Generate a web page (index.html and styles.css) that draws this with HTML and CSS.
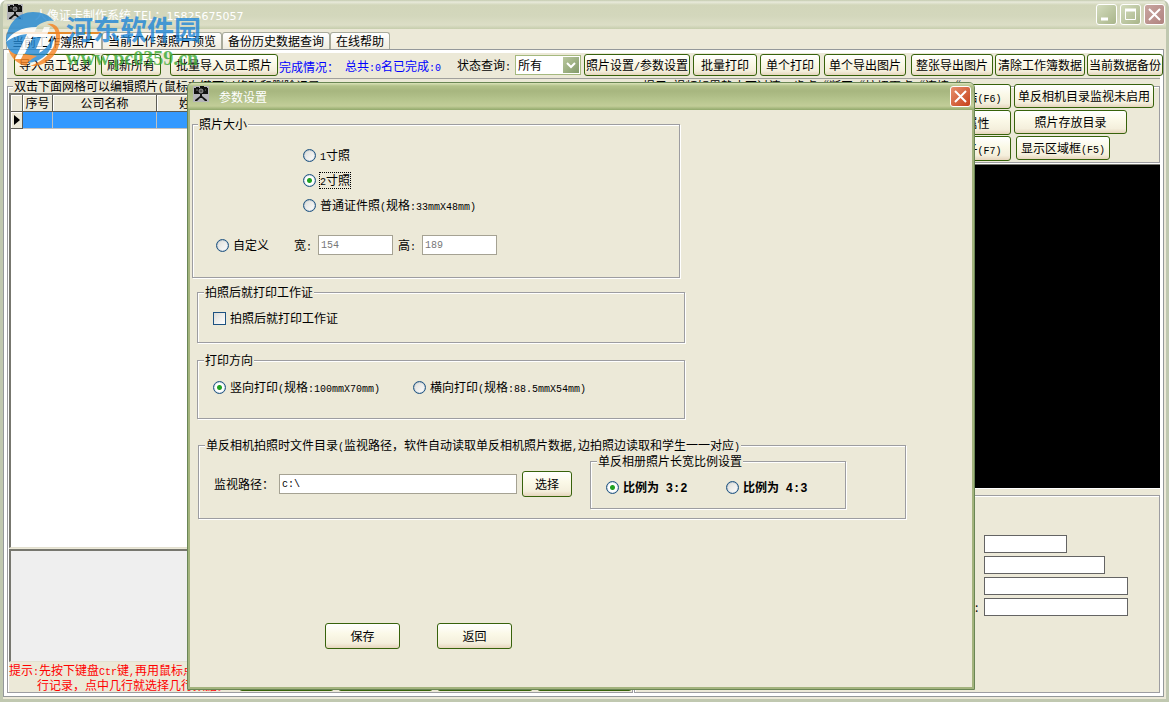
FILE: index.html
```html
<!DOCTYPE html>
<html lang="zh-CN">
<head>
<meta charset="utf-8">
<title>人像证卡制作系统</title>
<link rel="stylesheet" href="styles.css">
</head>
<body>
<svg class="defs" width="0" height="0" aria-hidden="true">
  <symbol id="camera" viewBox="0 0 16 16">
    <rect width="16" height="16" fill="#b4b4b8"/>
    <path d="M1 2h2V1h3v1h1V0h4v1h3v1h1v6H1z" fill="#111"/>
    <path d="M7 8h2v2l5 4v1h-2L9 12H7l-3 3H2v-1l5-4z" fill="#111"/>
    <circle cx="8" cy="5" r="2" fill="#555" stroke="#bbb" stroke-width=".7"/>
    <path d="M3 4h2M12 4h1" stroke="#777"/>
  </symbol>
</svg>
<div class="window">
  <header class="titlebar">
    <svg class="app-icon"><use href="#camera"/></svg>
    <h1 class="title">人像证卡制作系统 TEL：<span class="phone">15825675057</span></h1>
    <div class="controls">
      <button class="ctl" aria-label="最小化"><svg viewBox="0 0 19 19"><path d="M4 14h7" stroke="#fff" stroke-width="3"/></svg></button>
      <button class="ctl" aria-label="最大化"><svg viewBox="0 0 19 19"><path d="M4.500 5.500h10v9h-10z" fill="none" stroke="#fff"/><path d="M4 5h11" stroke="#fff" stroke-width="3"/></svg></button>
      <button class="ctl ctl-close" aria-label="关闭"><svg viewBox="0 0 19 19"><path d="M4 4l11 11M15 4L4 15" stroke="#fff" stroke-width="2"/></svg></button>
    </div>
  </header>

  <nav class="tabs">
    <button class="tab tab-on">当前工作簿照片</button>
    <button class="tab">当前工作簿照片预览</button>
    <button class="tab">备份历史数据查询</button>
    <button class="tab">在线帮助</button>
  </nav>

  <main class="page">
    <div class="toolbar">
      <button class="btn import">导入员工记录</button>
      <button class="btn refresh">刷新所有</button>
      <button class="btn batch">批量导入员工照片</button>
      <span class="status">完成情况：</span>
      <span class="status total">总共<span class="mono">:0</span>名已完成<span class="mono">:0</span></span>
      <label class="query" for="state">状态查询<span class="mono">:</span></label>
      <span class="select-box"><select id="state"><option>所有</option></select><svg class="arrow" viewBox="0 0 16 16"><path d="M4 6l4 4 4-4" fill="none" stroke="#fff" stroke-width="2"/></svg></span>
      <button class="btn params">照片设置<span class="mono">/</span>参数设置</button>
      <button class="btn print-all">批量打印</button>
      <button class="btn print-one">单个打印</button>
      <button class="btn export">单个导出图片</button>
      <button class="btn export sheet">整张导出图片</button>
      <button class="btn clear">清除工作簿数据</button>
      <button class="btn backup">当前数据备份</button>
    </div>

    <div class="columns">
      <fieldset class="group records">
        <legend>双击下面网格可以编辑照片<span class="mono">(</span>鼠标右键可以修改和删除记录<span class="mono">)</span></legend>
        <div class="grid-box">
          <table class="grid">
            <colgroup><col class="c-mark"><col class="c-no"><col class="c-company"><col></colgroup>
            <thead><tr><th></th><th>序号</th><th>公司名称</th><th class="name">姓名</th></tr></thead>
            <tbody><tr><th scope="row"><svg class="mark" viewBox="0 0 6 10"><path d="M0 0l6 5-6 5z"/></svg></th><td></td><td></td><td></td></tr></tbody>
          </table>
        </div>
        <div class="preview"></div>
        <div class="records-foot">
          <p class="hint">提示<span class="mono">:</span>先按下键盘<span class="mono">Ctr</span>键<span class="mono">,</span>再用鼠标点<br><span class="hint-next">行记录，点中几行就选择几行数据。</span></p>
          <button class="btn foot"></button>
          <button class="btn foot"></button>
          <button class="btn foot"></button>
          <button class="btn foot"></button>
        </div>
      </fieldset>

      <div class="side">
        <fieldset class="group video">
          <legend>提示<span class="mono">:</span>视频如里静止不过清，步点“断开“按扭再点“连接“<span class="mono">:</span></legend>
          <div class="video-buttons">
            <button class="btn">视频冻结<span class="mono">(F6)</span></button>
            <button class="btn">视频属性</button>
            <button class="btn">显示格子<span class="mono">(F7)</span></button>
          </div>
          <div class="camera-buttons">
            <button class="btn watch">单反相机目录监视未启用</button>
            <button class="btn folder">照片存放目录</button>
            <button class="btn area">显示区域框<span class="mono">(F5)</span></button>
          </div>
        </fieldset>
        <div class="screen"></div>
        <form class="details">
          <div class="field"><label for="f1">:</label><input id="f1" class="f-short"></div>
          <div class="field"><label for="f2">:</label><input id="f2" class="f-mid"></div>
          <div class="field"><label for="f3">:</label><input id="f3" class="f-long"></div>
          <div class="field field-near"><label for="f4">:</label><input id="f4" class="f-long"></div>
        </form>
      </div>
    </div>
  </main>
</div>

<section class="dialog" role="dialog" aria-labelledby="dlg-title">
  <header class="dialog-bar">
    <svg class="app-icon"><use href="#camera"/></svg>
    <h2 class="title" id="dlg-title">参数设置</h2>
    <button class="ctl ctl-red" aria-label="关闭"><svg viewBox="0 0 19 19"><path d="M4 4l11 11M15 4L4 15" stroke="#fff" stroke-width="2"/></svg></button>
  </header>
  <form class="dialog-body">
    <fieldset class="group size">
      <legend>照片大小</legend>
      <div class="sizes">
        <label class="choice"><input type="radio" name="size"><span><span class="mono">1</span>寸照</span></label>
        <label class="choice"><input type="radio" name="size" checked><span class="focus"><span class="mono">2</span>寸照</span></label>
        <label class="choice"><input type="radio" name="size"><span>普通证件照<span class="mono">(</span>规格<span class="mono">:33mmX48mm)</span></span></label>
      </div>
      <div class="custom">
        <label class="choice"><input type="radio" name="size"><span>自定义</span></label>
        <label class="dim first" for="w">宽<span class="mono">:</span></label><input class="text dim-box" id="w" value="154" disabled>
        <label class="dim" for="h">高<span class="mono">:</span></label><input class="text dim-box" id="h" value="189" disabled>
      </div>
    </fieldset>

    <fieldset class="group after">
      <legend>拍照后就打印工作证</legend>
      <label class="choice"><input type="checkbox"><span>拍照后就打印工作证</span></label>
    </fieldset>

    <fieldset class="group direction">
      <legend>打印方向</legend>
      <div class="pair">
        <label class="choice"><input type="radio" name="dir" checked><span>竖向打印<span class="mono">(</span>规格<span class="mono">:100mmX70mm)</span></span></label>
        <label class="choice"><input type="radio" name="dir"><span>横向打印<span class="mono">(</span>规格<span class="mono">:88.5mmX54mm)</span></span></label>
      </div>
    </fieldset>

    <fieldset class="group path">
      <legend>单反相机拍照时文件目录<span class="mono">(</span>监视路径，软件自动读取单反相机照片数据<span class="mono">,</span>边拍照边读取和学生一一对应<span class="mono">)</span></legend>
      <div class="path-row">
        <div class="path-pick">
          <label for="dir">监视路径：</label><input class="text path-box" id="dir" value="c:\">
          <button class="btn pick" type="button">选择</button>
        </div>
        <fieldset class="group ratio">
          <legend>单反相册照片长宽比例设置</legend>
          <div class="pair">
            <label class="choice"><input type="radio" name="ratio" checked><span>比例为 <span class="digits">3:2</span></span></label>
            <label class="choice"><input type="radio" name="ratio"><span>比例为 <span class="digits">4:3</span></span></label>
          </div>
        </fieldset>
      </div>
    </fieldset>

    <div class="actions">
      <button class="btn action" type="button">保存</button>
      <button class="btn action" type="button">返回</button>
    </div>
  </form>
</section>

<div class="brand">
  <svg class="brand-logo" viewBox="0 0 56 56">
    <path d="M1 30C2 13 13 1 28 1c9 0 16 3 21 9-6-1-12 1-17 5L15 45C6 45 2 38 1 30z" fill="#2288d4"/>
    <path d="M17 48l14-27h9l-6 21c7-4 12-10 14-18 2 13-9 28-27 28z" fill="#2288d4"/>
    <path d="M42 13c9-2 14 5 13 15-1 16-14 28-30 27 15-5 26-17 26-30 0-6-3-10-9-12z" fill="#f58220"/>
    <path d="M3 37c4 6 9 8 17 6l12 2c-6 3-9 6-11 10C12 53 5 46 3 37z" fill="#f58220"/>
    <path d="M1 31c5-9 15-15 31-15L16 48h-6l12-25C13 24 6 27 1 31zM39 16h6l-8 22h-6l5-12h-9l2-5h8z" fill="#fff"/>
  </svg>
  <div class="brand-text"><span class="brand-name">河东软件园</span><span class="brand-url">www.pc0359.cn</span></div>
</div>
</body>
</html>
```
FILE: styles.css
```css
* { box-sizing: border-box; }
body {
  margin: 0;
  position: relative;
  height: 100vh;
  overflow: hidden;
  background: #fff;
  color: #000;
  font: 12px/14px "Noto Sans CJK SC", sans-serif;
}
button, input, select { font: inherit; color: inherit; margin: 0; padding: 0; }
h1, h2, p { margin: 0; font: inherit; }
.defs { position: absolute; }
.mono { font-family: "Liberation Mono", monospace; font-size: 10px; line-height: 10px; }

.window {
  display: flex;
  flex-direction: column;
  height: 100%;
  border: solid #c0c8b0;
  border-width: 0 3px 3px;
  border-radius: 7px 7px 0 0;
  overflow: hidden;
  background: #ece9d8;
}
.titlebar {
  display: flex;
  align-items: flex-start;
  flex: none;
  height: 29px;
  margin: 0 -3px;
  padding: 4px 4px 0 7px;
  background: linear-gradient(#c3caae, #e8eadb 2px, #d2d6ba 5px, #d3d7bc 16px, #dcdec6 25px, #c6cdac);
}
.app-icon { width: 16px; height: 16px; flex: none; }
.title { flex: 1; color: #fff; white-space: nowrap; }
.titlebar .title { padding: 4px 0 0 12px; }
.phone { font-family: "DejaVu Sans", sans-serif; font-size: 11px; }
.controls { display: flex; gap: 3px; }
.ctl {
  width: 21px;
  height: 21px;
  border: 1px solid #fff;
  border-radius: 3px;
  background: linear-gradient(135deg, #d3dbbd, #a9b58a);
}
.ctl svg { display: block; width: 19px; height: 19px; }
.ctl-close { background: linear-gradient(135deg, #c9a6a1, #b0837f); }
.ctl-red { background: linear-gradient(135deg, #e7906d, #c6401a); }

.tabs { display: flex; flex: none; padding: 3px 3px 0; }
.tab {
  height: 17px;
  padding: 0 5px;
  border: 1px solid #a9ab9c;
  border-bottom: 0;
  border-radius: 3px 3px 0 0;
  background: linear-gradient(#fff, #efecdf);
  line-height: 14px;
}
.tab-on { border-top: 2px solid #e68b2c; background: #fbfaf5; }

.page {
  display: flex;
  flex-direction: column;
  flex: 1;
  min-height: 0;
  margin: 0 2px 2px 0;
  padding: 3px;
  border: 1px solid #94989a;
  background: #fff;
}
.toolbar {
  display: flex;
  align-items: center;
  flex: none;
  height: 26px;
  padding: 0 0 2px 7px;
  border-bottom: 1px solid #a0a09c;
  background: #ece9d8;
  white-space: nowrap;
}
.btn {
  flex: none;
  height: 22px;
  padding: 0;
  border: 1px solid #37620b;
  border-radius: 3px;
  background: linear-gradient(#fff, #fbf9e8 40%, #f4efdc 80%, #e6d5bd);
  line-height: 18px;
  white-space: nowrap;
}
.import { width: 82px; }
.refresh { width: 60px; margin-left: 5px; }
.batch { width: 108px; margin-left: 9px; }
.status { margin-left: 1px; color: #00f; padding-top: 4px; }
.total { margin-left: 6px; }
.query { margin-left: 16px; padding-top: 1px; }
.select-box { position: relative; margin-left: 4px; }
.select-box select {
  appearance: none;
  display: block;
  width: 66px;
  height: 20px;
  padding: 0 2px;
  border: 1px solid #a5b97f;
  border-radius: 0;
  background: #fff;
}
.arrow { position: absolute; top: 2px; right: 2px; width: 16px; height: 16px; background: linear-gradient(135deg, #b9c79d, #839a6b); }
.params { width: 106px; margin-left: 3px; }
.print-all { width: 64px; margin-left: 3px; }
.print-one { width: 60px; margin-left: 3px; }
.export { width: 82px; margin-left: 4px; }
.sheet { margin-left: 5px; }
.clear { width: 90px; margin-left: 2px; }
.backup { width: 76px; margin-left: 2px; }

.columns {
  display: grid;
  grid-template-columns: minmax(0, 627fr) minmax(0, 527fr);
  gap: 1px;
  flex: 1;
  min-height: 0;
  background: #ece9d8;
}
.group {
  min-width: 0;
  margin: 0;
  padding: 0;
  border: 1px solid #9d9da1;
  box-shadow: 1px 1px #fff, inset 1px 1px #fff;
}
.group > legend { height: 14px; margin-left: 5px; padding: 0 1px; background: #ece9d8; white-space: nowrap; }

.records { display: flex; flex-direction: column; }
.grid-box, .preview { border: solid; border-width: 2px 1px 1px 2px; border-color: #77776f #e3e0d0 #e3e0d0 #77776f; margin: 0 1px; }
.grid-box { flex: 456; background: #fff; }
.preview { flex: 111; margin-top: 1px; background: #efefef; }
.grid { width: 100%; border-collapse: separate; border-spacing: 0; table-layout: fixed; }
.c-mark { width: 12px; }
.c-no { width: 30px; }
.c-company { width: 104px; }
.grid th, .grid td { height: 17px; padding: 0; border: solid #5c5c55; border-width: 0 1px 1px 0; line-height: 14px; font-weight: 400; }
.grid th { background: #ece9d8; box-shadow: inset 1px 1px #fff; }
.grid td { background: #39f; border-color: #c0c0c0; }
.grid .name { padding-left: 22px; text-align: left; }
.mark { display: block; width: 6px; height: 10px; margin-left: 3px; }
.records-foot { display: flex; align-items: flex-end; gap: 4px; padding: 1px 0; }
.hint { flex: none; width: 227px; padding-left: 1px; color: #f00; line-height: 13px; white-space: nowrap; }
.hint-next { margin-left: 28px; }
.foot { flex: 1 1 0; }

.side { display: flex; flex-direction: column; min-height: 0; }
.video { display: flex; justify-content: flex-end; gap: 3px; height: 84px; padding-right: 5px; }
.video > legend { margin-left: 7px; }
.video-buttons { display: grid; gap: 1px; align-content: start; margin-top: -9px; }
.camera-buttons { display: grid; gap: 2px; align-content: start; margin-top: -9px; }
.video .btn { height: 25px; }
.camera-buttons .btn { height: 24px; }
.video-buttons .btn { width: 91px; }
.watch { width: 140px; }
.folder { width: 113px; }
.camera-buttons .area { width: 94px; margin-left: 2px; }
.screen { flex: 1; margin: 1px 0 6px; border-top: 1px solid #77776f; border-bottom: 1px solid #fff; background: #000; }
.details {
  display: grid;
  align-content: start;
  gap: 3px;
  height: 198px;
  padding-top: 39px;
  border: 1px solid #9d9da1;
  box-shadow: inset 1px 1px #fff;
}
.field { display: flex; padding-left: 325px; }
.field label { width: 24px; line-height: 18px; }
.field-near label { padding-left: 15px; }
.field input { height: 18px; border: 1px solid #646464; background: #fff; }
.f-short { width: 83px; }
.f-mid { width: 121px; }
.f-long { width: 144px; }

.dialog {
  position: absolute;
  inset: 82px 194px 12px 187px;
  display: flex;
  flex-direction: column;
  border: 1px solid #6a8655;
  border-radius: 6px 6px 0 0;
  box-shadow: inset 0 0 0 2px #a3b37d;
  background: #ece9d8;
}
.dialog-bar {
  display: flex;
  flex: none;
  height: 27px;
  padding: 3px 3px 0 5px;
  border-radius: 5px 5px 0 0;
  background: linear-gradient(#dce4bb, #b2c18a 3px, #a7b67f 8px, #b4c38c 16px, #c2cd98 23px, #91a86b);
}
.dialog-bar .title { padding: 4px 0 0 10px; }
.dialog-body { padding: 7px 0 0 4px; }
.choice { display: flex; align-items: center; gap: 4px; height: 20px; white-space: nowrap; }
.choice input {
  appearance: none;
  flex: none;
  width: 13px;
  height: 13px;
  border: 1px solid #1d5281;
  background: linear-gradient(135deg, #dcdcd7, #fff);
}
.choice input[type="radio"] { border-radius: 50%; box-shadow: inset 0 0 1px #1d5281; }
.choice input[type="radio"]:checked { background: radial-gradient(circle, #21a121 0 2px, #fff 3px); }
.focus { outline: 1px dotted #000; }
.size { width: 488px; padding: 14px 0 22px; }
.sizes { display: grid; gap: 5px; padding-left: 110px; }
.custom { display: flex; align-items: center; margin-top: 20px; padding-left: 23px; }
.dim { width: 24px; }
.dim + .text { margin-right: 5px; }
.dim.first { margin-left: 25px; }
.text { height: 20px; padding: 0 2px; border: 1px solid #a5a293; background: #fff; font-family: "Liberation Mono", monospace; font-size: 10px; }
.text:disabled { color: #777; }
.dim-box { width: 75px; }
.after, .direction { width: 488px; margin-left: 5px; padding-left: 15px; }
.after > legend, .direction > legend, .path > legend, .ratio > legend { margin-left: -9px; }
.after { margin-top: 7px; padding-top: 9px; padding-bottom: 14px; }
.direction { margin-top: 10px; padding-top: 10px; padding-bottom: 21px; }
.direction .pair { display: grid; grid-template-columns: 200px auto; justify-content: start; }
.path { width: 708px; margin: 19px 0 0 6px; padding: 2px 0 9px 15px; }
.path-row { display: flex; gap: 18px; }
.path-pick { display: flex; align-items: center; height: 26px; margin-top: 17px; white-space: nowrap; }
.path-pick label { width: 65px; }
.path-box { width: 238px; }
.pick { width: 50px; height: 26px; margin-left: 5px; }
.ratio { width: 256px; padding: 9px 0 11px 15px; font-weight: 700; }
.ratio > legend { font-weight: 400; }
.ratio .pair { display: grid; grid-template-columns: 120px auto; justify-content: start; }
.digits { margin-left: 4px; font-family: "Liberation Mono", monospace; line-height: 12px; }
.actions { display: flex; gap: 37px; margin: 104px 0 0 133px; }
.action { width: 75px; height: 26px; }

.brand { position: absolute; top: 11px; left: 5px; display: flex; gap: 5px; opacity: .8; pointer-events: none; }
.brand-logo { width: 56px; height: 56px; }
.brand-text { display: flex; flex-direction: column; white-space: nowrap; }
.brand-name { color: #1f86d6; font-size: 27px; line-height: 36px; font-weight: 700; }
.brand-url { color: #3aa935; font: 700 20px/22px "Liberation Serif", serif; }
```
